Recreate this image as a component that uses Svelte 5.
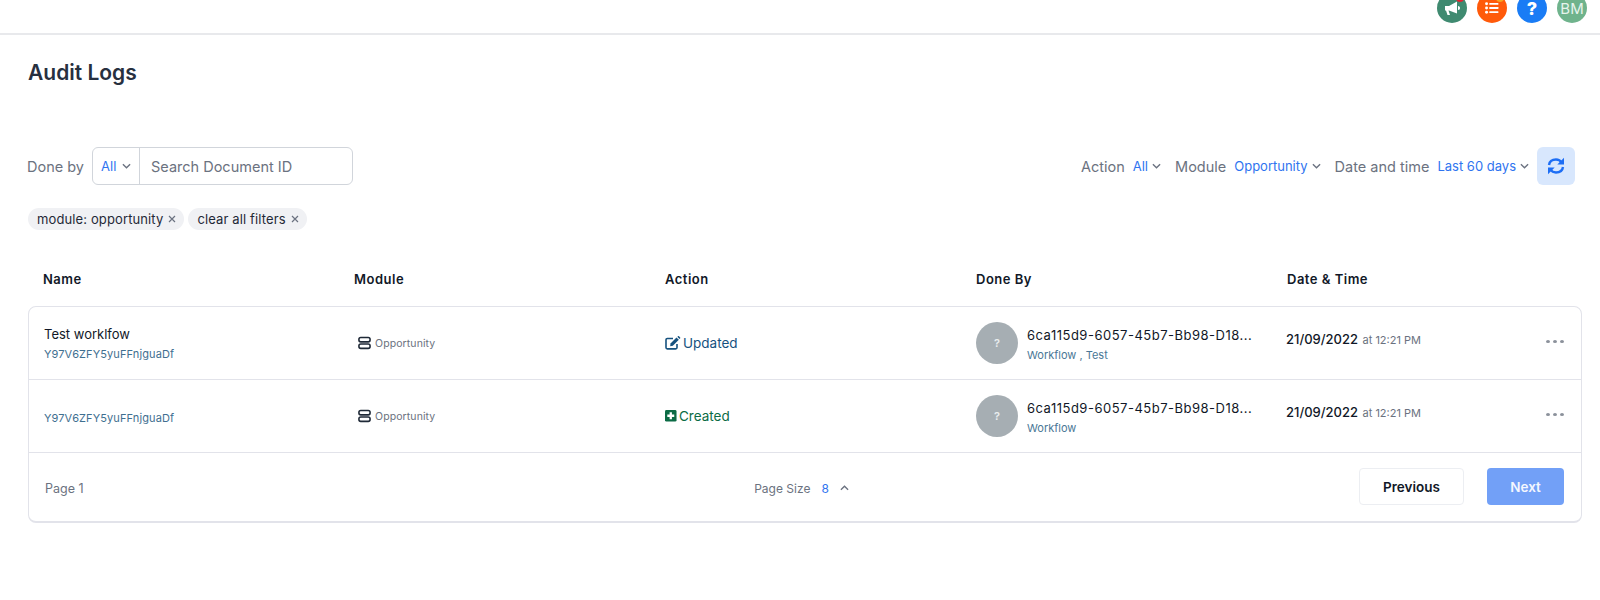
<script>
  const rows = [
    { name: 'Test worklfow', id: 'Y97V6ZFY5yuFFnjguaDf', action: 'Updated', kind: 'updated', roles: 'Workflow , Test' },
    { name: '', id: 'Y97V6ZFY5yuFFnjguaDf', action: 'Created', kind: 'created', roles: 'Workflow' }
  ];
  const heads = ['Name', 'Module', 'Action', 'Done By', 'Date & Time'];
</script>

<div class="page">
  <header class="topbar">
    <div class="round green">
      <svg width="17" height="15" viewBox="0 0 17 15"><path fill="#fff" d="M1 5h4l8-4.500v12L5 9.500H4.500L6 14H3.500L2 9.500H1z"/><path fill="#fff" d="M14 5c1.500 0 2 1 2 2s-.5 2-2 2z"/></svg>
      <span class="dot red"></span>
    </div>
    <div class="round orange">
      <svg width="14" height="12" viewBox="0 0 15 13"><g fill="#fff"><circle cx="1.600" cy="2" r="1.600"/><circle cx="1.600" cy="6.500" r="1.600"/><circle cx="1.600" cy="11" r="1.600"/><rect x="4.500" y="1" width="10" height="2" rx=".5"/><rect x="4.500" y="5.500" width="10" height="2" rx=".5"/><rect x="4.500" y="10" width="10" height="2" rx=".5"/></g></svg>
      <span class="dot amber"></span>
    </div>
    <div class="round blue"><span class="q">?</span></div>
    <div class="round sage"><span class="bm">BM</span></div>
  </header>

  <main class="content">
    <h1>Audit Logs</h1>

    <div class="filters">
      <div class="left">
        <span class="label">Done by</span>
        <div class="search">
          <div class="sel"><span class="link">All</span>
            <svg class="chev" viewBox="0 0 10 6"><path d="M1 1l4 4 4-4"/></svg>
          </div>
          <span class="ph">Search Document ID</span>
        </div>
      </div>
      <div class="right">
        <span class="label">Action</span>
        <span class="link val">All</span>
        <svg class="chev" viewBox="0 0 10 6"><path d="M1 1l4 4 4-4"/></svg>
        <span class="label gap">Module</span>
        <span class="link val">Opportunity</span>
        <svg class="chev" viewBox="0 0 10 6"><path d="M1 1l4 4 4-4"/></svg>
        <span class="label gap">Date and time</span>
        <span class="link val">Last 60 days</span>
        <svg class="chev" viewBox="0 0 10 6"><path d="M1 1l4 4 4-4"/></svg>
        <button class="refresh" aria-label="Refresh">
          <svg width="18" height="18" viewBox="0 0 18 18" fill="none"><path stroke="#1d6ef5" stroke-width="2.400" d="M2 8c.5-3.500 3.300-5.500 7-5.500 2.400 0 4.300 1 5.500 3"/><path fill="#1d6ef5" d="M17 .8V7.500h-6.700z"/><path stroke="#1d6ef5" stroke-width="2.400" d="M16 10c-.5 3.500-3.300 5.500-7 5.500-2.400 0-4.300-1-5.500-3"/><path fill="#1d6ef5" d="M1 17.200V10.500h6.700z"/></svg>
        </button>
      </div>
    </div>

    <div class="chips">
      <span class="chip">module: opportunity <svg class="x" viewBox="0 0 8 8"><path d="M1 1l6 6M7 1L1 7"/></svg></span>
      <span class="chip">clear all filters <svg class="x" viewBox="0 0 8 8"><path d="M1 1l6 6M7 1L1 7"/></svg></span>
    </div>

    <div class="thead">
      {#each heads as h}<div class="th">{h}</div>{/each}
    </div>

    <section class="card">
      {#each rows as r}
        <div class="row">
          <div class="cell">
            {#if r.name}<div class="name">{r.name}</div>{/if}
            <div class="docid">{r.id}</div>
          </div>
          <div class="cell mod">
            <svg width="13" height="14" viewBox="0 0 14 14" fill="none" stroke="#1f2937" stroke-width="1.700"><rect x="1" y="1" width="12" height="4.800" rx="2"/><rect x="1" y="8" width="12" height="4.800" rx="2"/></svg>
            <span>Opportunity</span>
          </div>
          <div class="cell act {r.kind}">
            {#if r.kind === 'updated'}
              <svg width="16" height="14" viewBox="0 0 16 14"><path fill="none" stroke="#16527f" stroke-width="1.600" d="M12 8v3.600c0 .8-.5 1.300-1.300 1.300H2.300C1.500 12.900 1 12.400 1 11.600V3.800c0-.8.500-1.300 1.300-1.300H8"/><path fill="#16527f" d="M5.500 7.500L11.500 1.500 13.800 3.800 7.800 9.800 5.200 10.200z"/><path fill="#16527f" d="M12.300.8l.8-.6c.3-.2.6-.2.9 0l1.200 1.200c.2.300.2.600 0 .9l-.7.800z"/></svg>
            {:else}
              <svg width="13" height="13" viewBox="0 0 13 13"><rect width="12.500" height="12.500" rx="1.500" fill="#0b6b45"/><path fill="#fff" d="M5 2.500h2.500V5H10v2.500H7.500V10H5V7.500H2.500V5H5z"/></svg>
            {/if}
            <span>{r.action}</span>
          </div>
          <div class="cell by">
            <div class="avatar">?</div>
            <div class="who">
              <div class="uuid">6ca115d9-6057-45b7-Bb98-D18...</div>
              <div class="roles">{r.roles}</div>
            </div>
          </div>
          <div class="cell when">
            <span class="date">21/09/2022</span> <span class="time">at 12:21 PM</span>
            <div class="more"><i></i><i></i><i></i></div>
          </div>
        </div>
      {/each}
      <footer class="foot">
        <span class="pg one">Page 1</span>
        <div class="size"><span class="pg">Page Size</span><span class="link eight">8</span>
          <svg class="chev up" viewBox="0 0 10 6"><path d="M1 5l4-4 4 4"/></svg>
        </div>
        <div class="btns">
          <button class="prev">Previous</button>
          <button class="next">Next</button>
        </div>
      </footer>
    </section>
  </main>
</div>

<style>
  :global(body) { margin: 0; background: #fff; }
  .page { font-family: Inter, "Liberation Sans", sans-serif; height: 600px; overflow: hidden; color: #111827; }
  .topbar { height: 35px; box-sizing: border-box; border-bottom: 2px solid #e8e9ec; display: flex; justify-content: flex-end; align-items: flex-start; gap: 10px; padding-right: 13px; overflow: hidden; }
  .round { width: 30px; height: 30px; margin-top: -7px; border-radius: 50%; flex: none; display: flex; align-items: center; justify-content: center; position: relative; color: #fff; }
  .green { background: #3f8a70; }
  .orange { background: #ff5a0a; }
  .blue { background: #1a7cf5; }
  .sage { background: #6fb38c; }
  .q { font-weight: 800; font-size: 18px; }
  .bm { font-size: 15px; color: #e6f3ec; }
  .dot { position: absolute; width: 8px; height: 8px; border-radius: 50%; right: 3px; top: 1px; }
  .red { background: #e8202e; }
  .amber { background: #f5a623; }
  .content { padding: 0 18px 0 28px; }
  h1 { margin: 26px 0 0; font-size: 21px; line-height: 24px; font-weight: 600; color: #27303f; }
  .filters { display: flex; justify-content: space-between; align-items: center; margin-top: 62px; height: 38px; }
  .left, .right { display: flex; align-items: center; }
  .left { margin-left: -1px; }
  .right { margin-right: 7px; }
  .label { font-size: 14.500px; color: #6b7280; }
  .gap { margin-left: 14px; }
  .link { color: #2f74f0; }
  .search { margin-left: 8px; width: 261px; height: 38px; box-sizing: border-box; border: 1px solid #d1d5db; border-radius: 6px; display: flex; align-items: center; }
  .sel { width: 47px; height: 100%; border-right: 1px solid #d1d5db; display: flex; align-items: center; padding-left: 8px; box-sizing: border-box; font-size: 13px; gap: 6px; flex: none; }
  .ph { font-size: 14.500px; color: #6b7280; margin-left: 11px; }
  .chev { width: 9px; height: 6px; fill: none; stroke: #6b7280; stroke-width: 1.500; flex: none; }
  .val { font-size: 13px; margin-left: 8px; margin-right: 4px; }
  .refresh { margin-left: 8px; width: 38px; height: 38px; border: 0; border-radius: 6px; background: #d8e7fd; display: flex; align-items: center; justify-content: center; padding: 0; }
  .chips { display: flex; gap: 4px; margin-top: 23px; }
  .chip { height: 22px; border-radius: 11px; background: #f0f1f4; font-size: 13px; color: #1f2937; display: flex; align-items: center; gap: 5px; padding: 0 8px 0 9px; letter-spacing: .12px; }
  .x { width: 8px; height: 8px; fill: none; stroke: #6b7280; stroke-width: 1.200; }
  .thead { display: grid; grid-template-columns: repeat(5, 311px); padding-left: 15px; margin-top: 39px; height: 20px; align-items: center; }
  .th { font-size: 13px; font-weight: 600; letter-spacing: .5px; color: #111827; }
  .card { margin-top: 17px; border: 1px solid #e2e3ea; border-bottom-width: 2px; border-radius: 8px; box-sizing: border-box; height: 217px; }
  .row { display: grid; grid-template-columns: repeat(5, 311px); padding-left: 15px; height: 73px; box-sizing: border-box; border-bottom: 1px solid #e2e3ea; align-items: center; position: relative; }
  .name { font-size: 13px; font-weight: 400; color: #111827; line-height: 18px; }
  .docid { font-size: 11px; color: #3f6f90; line-height: 14px; margin-top: 4px; letter-spacing: .1px; }
  .mod { display: flex; align-items: center; gap: 4px; font-size: 10.500px; color: #6b7280; margin-left: 3px; letter-spacing: .1px; }
  .act { display: flex; align-items: center; gap: 2px; font-size: 13.500px; margin-left: -1px; }
  .updated { color: #16527f; }
  .created { color: #0b6b45; }
  .created svg { width: 12px; height: 12px; }
  .by { display: flex; align-items: center; gap: 9px; margin-left: -1px; }
  .avatar { width: 42px; height: 42px; border-radius: 50%; background: #a6aeb3; color: #e9ecee; font-size: 11px; font-weight: 600; display: flex; align-items: center; justify-content: center; flex: none; }
  .who { margin-top: 2px; }
  .uuid { font-size: 13px; color: #111827; line-height: 18px; letter-spacing: .5px; white-space: nowrap; }
  .roles { font-size: 11px; color: #4a7796; line-height: 14px; margin-top: 4px; }
  .when { white-space: nowrap; margin-top: -11px; margin-left: -2px; }
  .date { font-size: 13px; font-weight: 500; color: #111827; }
  .time { font-size: 11px; color: #6b7280; }
  .more { position: absolute; right: 17px; top: 33px; display: flex; gap: 3px; }
  .more i { width: 4px; height: 3px; border-radius: 50%; background: #8b919b; display: block; }
  .foot { height: 70px; display: grid; grid-template-columns: 1fr auto 1fr; align-items: center; padding: 0 17px 0 16px; }
  .pg { font-size: 12px; color: #6b7280; }
  .one { font-size: 12.500px; }
  .size { display: flex; align-items: center; margin-right: 6px; }
  .eight { font-size: 12px; margin-left: 11px; margin-right: 11px; }
  .btns { display: flex; justify-content: flex-end; gap: 23px; margin-top: -3px; }
  button { font-family: inherit; }
  .prev, .next { height: 37px; border-radius: 4px; font-size: 13.500px; font-weight: 600; }
  .prev { width: 105px; background: #fff; border: 1px solid #eceef2; color: #111827; }
  .next { width: 77px; background: #72a0f7; border: 0; color: #f4f7fe; }
</style>
